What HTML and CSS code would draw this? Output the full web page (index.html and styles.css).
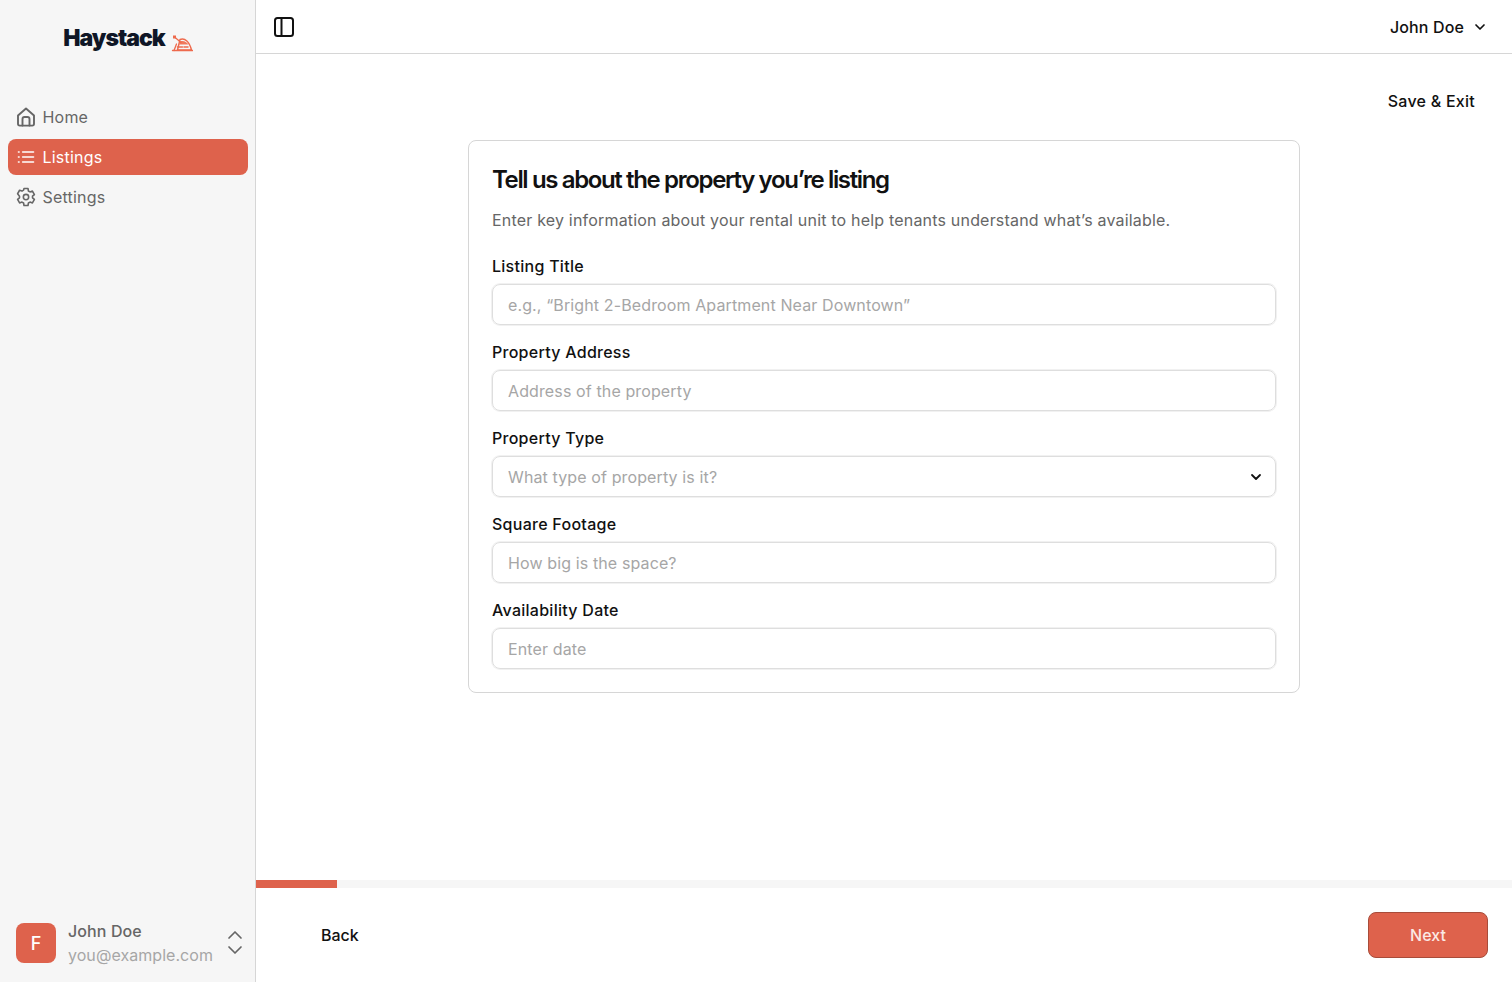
FILE: index.html
```html
<!DOCTYPE html>
<html lang="en">
<head>
<meta charset="utf-8">
<title>Haystack</title>
<link rel="stylesheet" href="styles.css">
</head>
<body>
<div class="app">
  <aside class="sidebar">
    <div class="logo">
      <span class="logo-text">Haystack</span>
      <svg class="logo-mark" width="22" height="18" viewBox="0 0 22 18" fill="none" stroke-linejoin="round" stroke-linecap="round">
        <path d="M6.500 16 L9 5.500 C14 3.500 18.500 8 20.500 16z" fill="#F6F6F6" stroke="#EE6A4D" stroke-width="1.400"/>
        <path d="M9 7.500 C13 6 16 9 17.500 10.500 H8z" fill="#F0785C"/>
        <path d="M6.500 13h5M13 13h4" stroke="#EE6A4D" stroke-width="1.500"/>
        <path d="M1.500 16.500h20" stroke="#EE6A4D" stroke-width="1.300"/>
        <path d="M3 16.500 L5.500 10" stroke="#EE6A4D" stroke-width="1.300"/>
        <path d="M3.500 3 L10 8.500" stroke="#EE6A4D" stroke-width="1.300"/>
        <rect x="2" y="1.500" width="3" height="3" fill="#EE6A4D"/>
      </svg>
    </div>
    <nav class="nav">
      <a class="nav-item">
        <svg width="20" height="20" viewBox="0 0 20 20" fill="none" stroke="currentColor" stroke-width="1.900" stroke-linecap="round" stroke-linejoin="round"><path d="M2 8.500 10 1.500l8 7v8.300a1.800 1.800 0 0 1-1.800 1.800H3.800A1.800 1.800 0 0 1 2 16.800z"/><path d="M6.500 18.500v-6.500a2 2 0 0 1 2-2h3a2 2 0 0 1 2 2v6.500"/></svg>
        <span>Home</span>
      </a>
      <a class="nav-item active">
        <svg width="20" height="20" viewBox="0 0 24 24" fill="none" stroke="currentColor" stroke-width="2" stroke-linecap="round" stroke-linejoin="round"><path d="M8 6h13M8 12h13M8 18h13M3 6h.7M3 12h.7M3 18h.7"/></svg>
        <span>Listings</span>
      </a>
      <a class="nav-item">
        <svg width="20" height="20" viewBox="0 0 24 24" fill="none" stroke="currentColor" stroke-width="1.900" stroke-linecap="round" stroke-linejoin="round"><path d="M9.600 1.800h4.800l.5 3 1.900 1.100 2.900-1 2.400 4.200-2.300 1.900v2l2.300 1.900-2.400 4.200-2.900-1-1.900 1.100-.5 3H9.600l-.5-3-1.900-1.100-2.900 1-2.400-4.200 2.300-1.900v-2L1.900 8.100l2.400-4.200 2.900 1 1.900-1.100z"/><circle cx="12" cy="12" r="3.200"/></svg>
        <span>Settings</span>
      </a>
    </nav>
    <div class="account">
      <div class="avatar">F</div>
      <div class="account-text">
        <div class="account-name">John Doe</div>
        <div class="account-mail">you@example.com</div>
      </div>
      <svg class="updown" width="16" height="28" viewBox="0 0 16 28" fill="none" stroke="#666" stroke-width="1.700" stroke-linecap="round" stroke-linejoin="round"><path d="M2 9 8 3l6 6"/><path d="M2 18l6 6 6-6"/></svg>
    </div>
  </aside>
  <main class="main">
    <header class="topbar">
      <svg width="24" height="24" viewBox="0 0 24 24" fill="none" stroke="#111" stroke-width="2" stroke-linejoin="round"><rect x="3" y="3" width="18" height="18" rx="2.500"/><path d="M9.500 3v18"/></svg>
      <div class="user-menu">
        <span>John Doe</span>
        <svg width="16" height="16" viewBox="0 0 16 16" fill="none" stroke="#111" stroke-width="1.700" stroke-linecap="round" stroke-linejoin="round"><path d="M4 6l4 4 4-4"/></svg>
      </div>
    </header>
    <div class="content">
      <div class="save-row"><a class="save-exit">Save &amp; Exit</a></div>
      <section class="card">
        <h1>Tell us about the property you’re listing</h1>
        <p class="lead">Enter key information about your rental unit to help tenants understand what’s available.</p>
        <div class="field">
          <label>Listing Title</label>
          <div class="input">e.g., “Bright 2-Bedroom Apartment Near Downtown”</div>
        </div>
        <div class="field">
          <label>Property Address</label>
          <div class="input">Address of the property</div>
        </div>
        <div class="field">
          <label>Property Type</label>
          <div class="input select">
            <span>What type of property is it?</span>
            <svg width="16" height="16" viewBox="0 0 16 16" fill="none" stroke="#111" stroke-width="1.800" stroke-linecap="round" stroke-linejoin="round"><path d="M4 6l4 4 4-4"/></svg>
          </div>
        </div>
        <div class="field">
          <label>Square Footage</label>
          <div class="input">How big is the space?</div>
        </div>
        <div class="field">
          <label>Availability Date</label>
          <div class="input">Enter date</div>
        </div>
      </section>
    </div>
    <div class="progress"><div class="progress-fill"></div></div>
    <footer class="footer">
      <a class="back">Back</a>
      <a class="next">Next</a>
    </footer>
  </main>
</div>
</body>
</html>
```
FILE: styles.css
```css
* { box-sizing: border-box; }
html, body { margin: 0; height: 100%; }
body {
  font-family: Inter, "Liberation Sans", sans-serif;
  font-size: 16px;
  color: #111;
  background: #fff;
  -webkit-font-smoothing: antialiased;
}
.app { display: flex; height: 982px; overflow: hidden; }
.sidebar {
  width: 256px;
  flex: none;
  background: #F6F6F6;
  border-right: 1px solid #D6D6D6;
  display: flex;
  flex-direction: column;
  padding: 0 7px 0 8px;
}
.logo {
  display: flex;
  justify-content: center;
  align-items: flex-start;
  height: 99px;
  padding: 24px 0 0 0;
  gap: 6px;
}
.logo-text {
  font-size: 23px;
  line-height: 29px;
  font-weight: 900;
  color: #0F1626;
  letter-spacing: -1px;
}
.logo-mark { margin-top: 10px; }
.nav { display: flex; flex-direction: column; gap: 4px; }
.nav-item {
  display: flex;
  align-items: center;
  gap: 6.500px;
  height: 36px;
  padding: 0 8px;
  border-radius: 8px;
  color: #666;
  font-size: 16px;
  letter-spacing: 0.2px;
}
.nav-item.active { background: #DE624C; color: #fff; }
.account {
  margin-top: auto;
  display: flex;
  align-items: center;
  padding: 0 0 15px 8px;
}
.avatar {
  width: 40px;
  height: 40px;
  flex: none;
  border-radius: 8px;
  background: #DE624C;
  color: #fff;
  font-size: 18px;
  font-weight: 500;
  display: flex;
  align-items: center;
  justify-content: center;
}
.account-text { margin-left: 12px; flex: 1; }
.account-name { font-size: 16px; line-height: 24px; font-weight: 500; color: #666; letter-spacing: 0.1px; }
.account-mail { font-size: 16px; line-height: 24px; color: #A6A6A6; letter-spacing: 0.05px; }
.updown { margin-right: 5px; }
.main { flex: 1; min-width: 0; display: flex; flex-direction: column; }
.topbar {
  height: 54px;
  flex: none;
  border-bottom: 1px solid #D6D6D6;
  display: flex;
  align-items: center;
  justify-content: space-between;
  padding: 0 24px 0 16px;
}
.user-menu { display: flex; align-items: center; gap: 8px; font-size: 16px; font-weight: 500; color: #111; letter-spacing: 0.13px; }
.content { flex: 1; display: flex; flex-direction: column; align-items: center; }
.save-row { width: 100%; display: flex; justify-content: flex-end; padding: 35px 37px 0 0; height: 86px; }
.save-exit { font-size: 16px; line-height: 24px; font-weight: 500; color: #111; letter-spacing: 0.25px; }
.card {
  width: 832px;
  height: 553px;
  border: 1px solid #D6D6D6;
  border-radius: 8px;
  padding: 24px 23px 23px;
}
h1 {
  margin: 0;
  font-size: 24px;
  line-height: 30px;
  font-weight: 600;
  letter-spacing: -1.370px;
  color: #111;
}
.lead { margin: 13px 0 0; font-size: 16px; line-height: 24px; color: #666; letter-spacing: 0.19px; }
.field { margin-top: 15px; }
.field:first-of-type { margin-top: 22px; }
.field label { display: block; font-size: 16px; line-height: 24px; font-weight: 500; color: #111; margin-bottom: 6px; letter-spacing: 0.27px; }
.input {
  height: 41px;
  border: 1px solid #DEDEDE;
  border-radius: 8px;
  box-shadow: 0 0 0 1px #F1F1F1;
  padding: 0 15px;
  display: flex;
  align-items: center;
  font-size: 16px;
  color: #A6A6A6;
  letter-spacing: 0.12px;
}
.select { justify-content: space-between; padding-right: 11px; }
.progress { height: 8px; flex: none; background: #F6F6F6; }
.progress-fill { width: 81px; height: 8px; background: #DE624C; }
.footer {
  height: 94px;
  flex: none;
  display: flex;
  align-items: center;
  justify-content: space-between;
  padding: 0 24px 0 65px;
}
.back { font-size: 16px; font-weight: 500; color: #111; }
.next {
  width: 120px;
  height: 46px;
  border-radius: 8px;
  background: #DE624C;
  border: 1px solid #A84C3A;
  color: #FBE9E5;
  font-size: 16px;
  font-weight: 500;
  display: flex;
  align-items: center;
  justify-content: center;
}
```
